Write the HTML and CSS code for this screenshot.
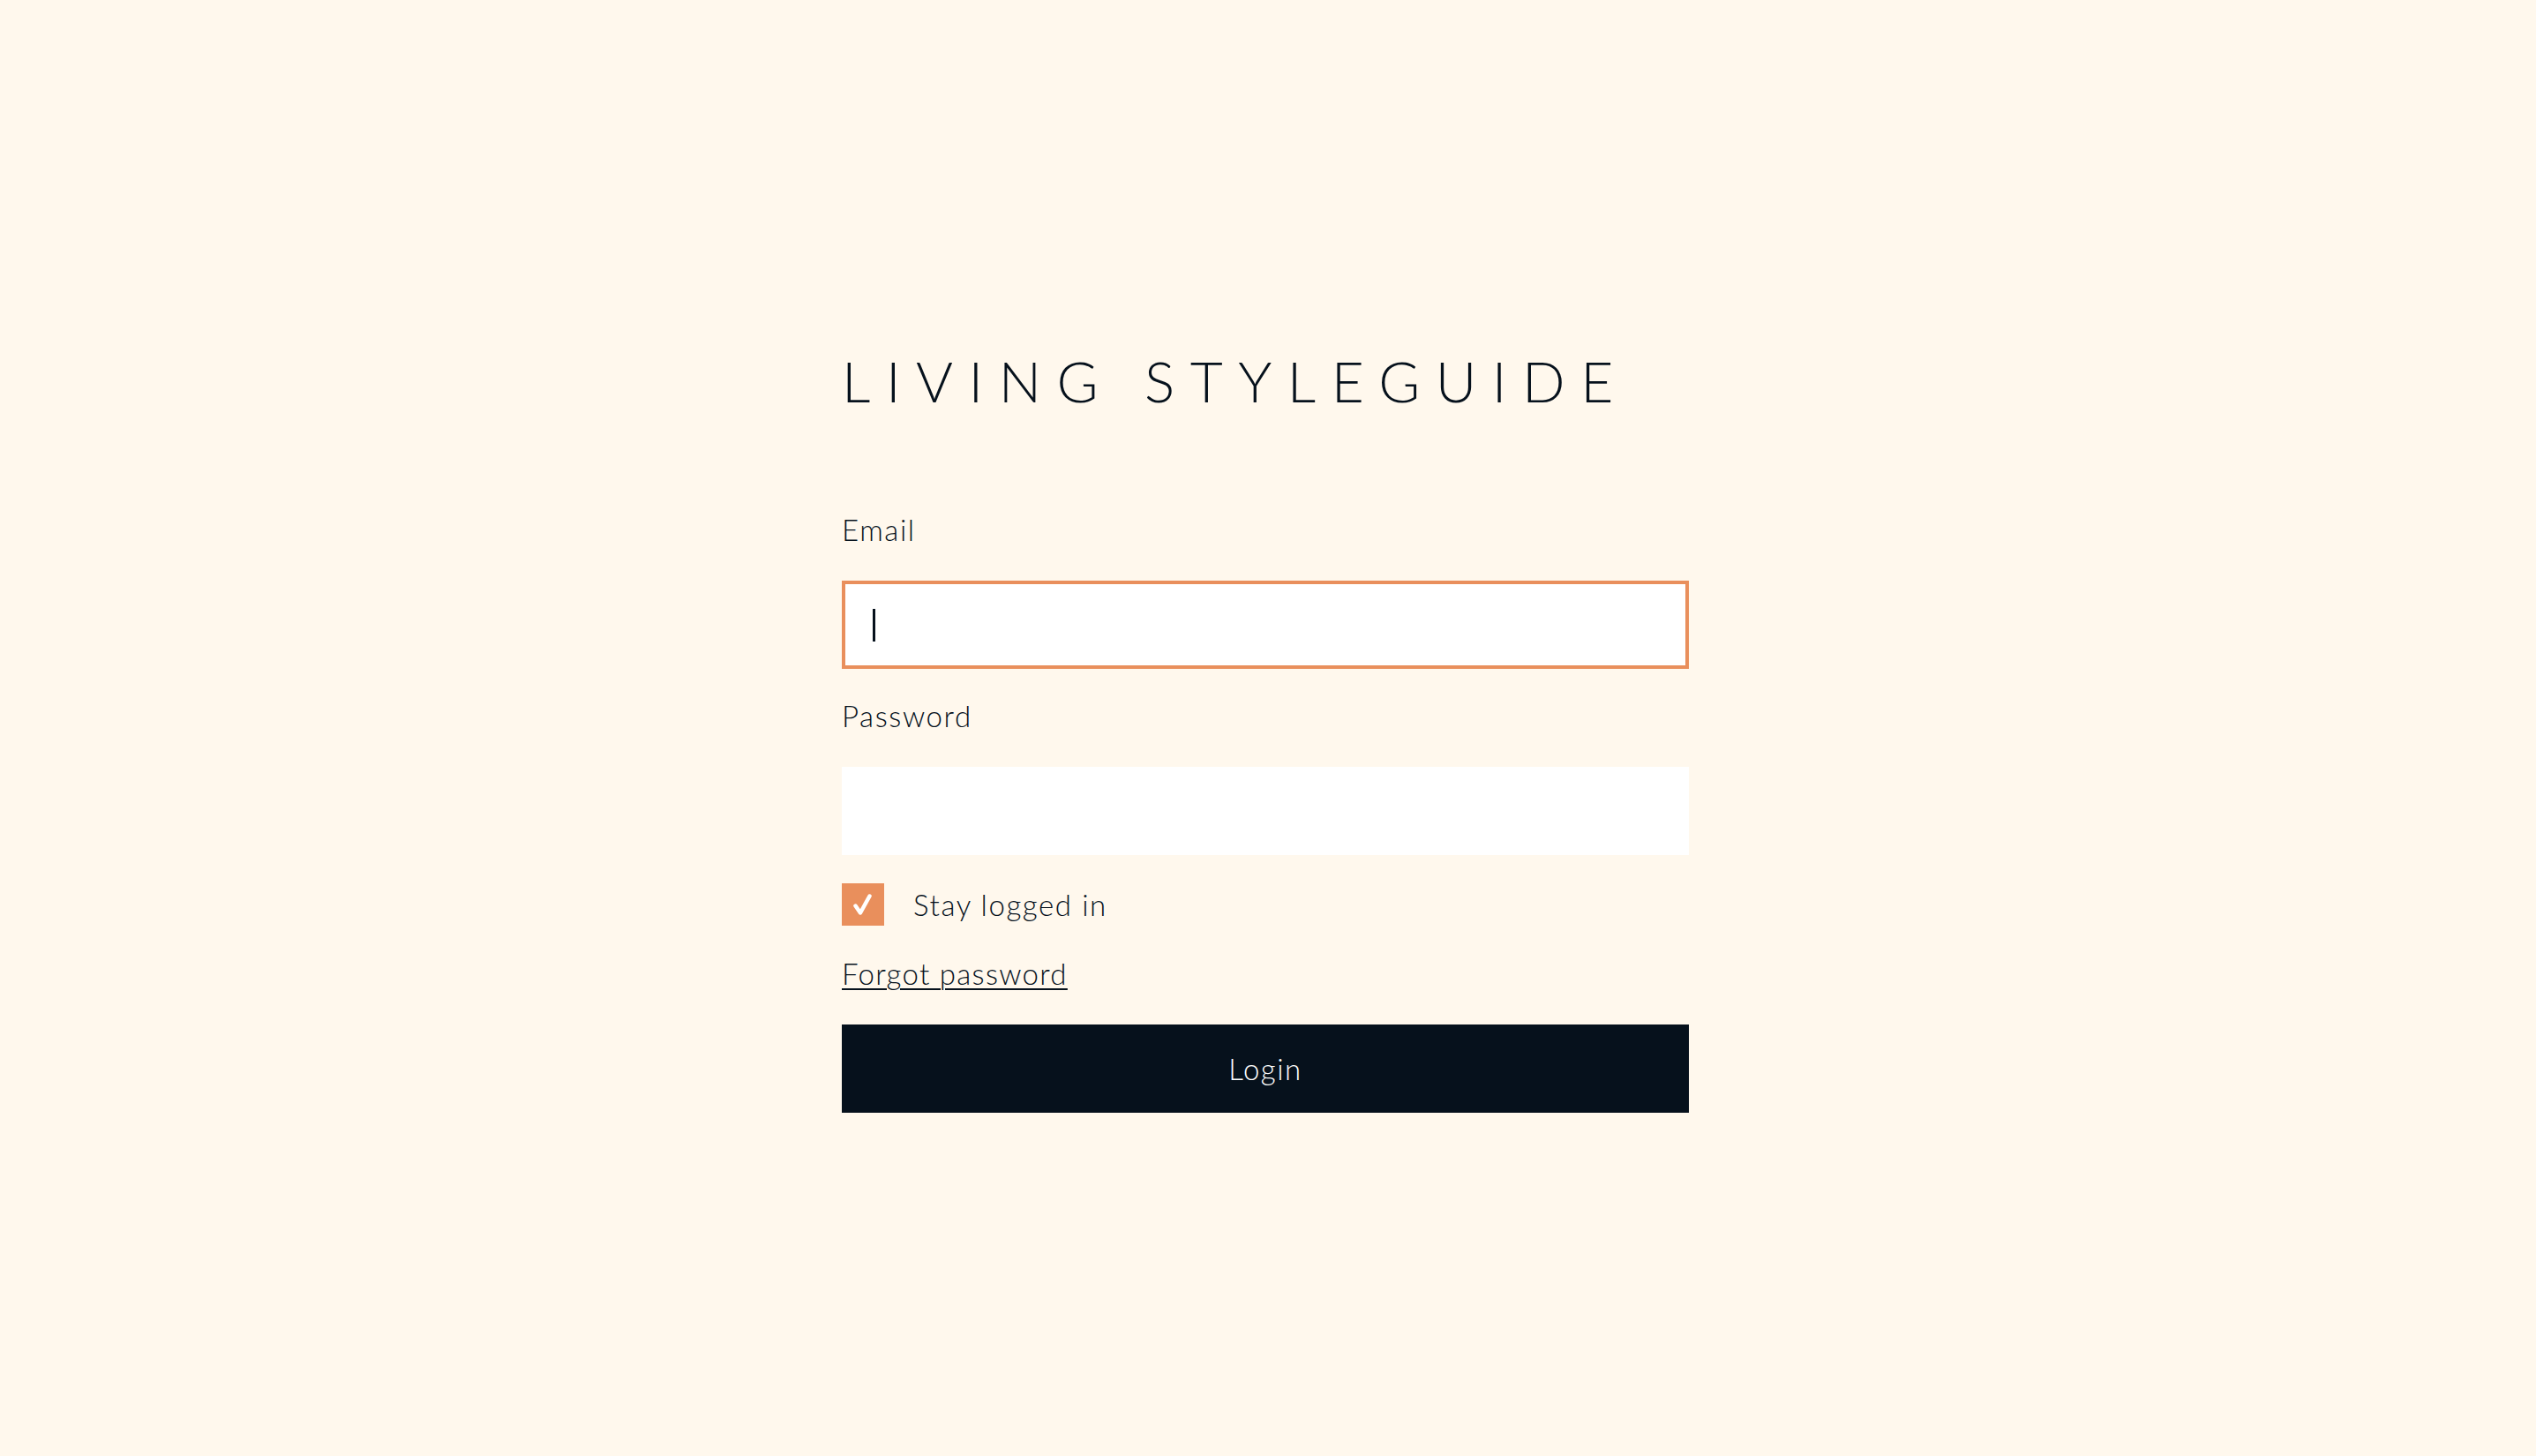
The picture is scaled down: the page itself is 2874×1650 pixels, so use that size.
FILE: index.html
```html
<!DOCTYPE html>
<html lang="en">
<head>
<meta charset="utf-8">
<title>Living Styleguide – Login</title>
<link rel="stylesheet" href="styles.css">
</head>
<body>
<main class="page">
  <form class="login">
    <h1 class="title">LIVING STYLEGUIDE</h1>
    <label class="label label-email" for="email">Email</label>
    <div class="field field-focus"><span class="caret"></span></div>
    <label class="label label-password" for="password">Password</label>
    <div class="field"></div>
    <div class="remember">
      <span class="checkbox">
        <svg viewBox="0 0 48 48" width="48" height="48" aria-hidden="true">
          <path d="M15.5 25.5 L21 33.5 L31.5 14.5" fill="none" stroke="#ffffff" stroke-width="4.5" stroke-linecap="round" stroke-linejoin="round"/>
        </svg>
      </span>
      <span class="remember-text">Stay logged in</span>
    </div>
    <a class="forgot" href="#">Forgot password</a>
    <button class="btn" type="button">Login</button>
  </form>
</main>
</body>
</html>
```

FILE: styles.css
```css
html, body {
  margin: 0;
  padding: 0;
}
body {
  background: #fff8ed;
  color: #06111c;
  font-family: "Lato", "Liberation Sans", sans-serif;
  font-weight: 300;
  width: 2874px;
  height: 1650px;
  overflow: hidden;
}
.page {
  display: flex;
  justify-content: center;
  padding-top: 400px;
  padding-right: 6px;
}
.login {
  width: 960px;
  display: flex;
  flex-direction: column;
  align-items: stretch;
}
.title {
  margin: 0;
  font-size: 64px;
  line-height: 64px;
  font-weight: 300;
  letter-spacing: 17.5px;
  color: #06111c;
  white-space: nowrap;
}
.label {
  font-size: 33px;
  line-height: 32px;
  letter-spacing: 1.6px;
}
.label-email {
  margin-top: 120px;
}
.label-password {
  margin-top: 37px;
}
.field {
  margin-top: 42px;
  height: 100px;
  box-sizing: border-box;
  background: #ffffff;
  display: flex;
  align-items: center;
  padding-left: 31px;
}
.field-focus {
  border: 4px solid #e98f5c;
  padding-left: 31px;
}
.caret {
  width: 3px;
  height: 37px;
  background: #06111c;
}
.remember {
  margin-top: 32px;
  display: flex;
  align-items: center;
  gap: 33px;
  height: 48px;
}
.checkbox {
  width: 48px;
  height: 48px;
  background: #e98f5c;
  display: flex;
}
.remember-text {
  font-size: 33px;
  line-height: 32px;
  letter-spacing: 1.6px;
}
.forgot {
  margin-top: 38px;
  align-self: flex-start;
  font-size: 33px;
  line-height: 32px;
  color: #06111c;
  text-decoration: underline;
  text-underline-offset: 4px;
  text-decoration-thickness: 2px;
  letter-spacing: 1.3px;
}
.btn {
  margin-top: 42px;
  height: 100px;
  border: 0;
  background: #06111c;
  color: #ffffff;
  font-family: "Lato", "Liberation Sans", sans-serif;
  font-weight: 300;
  font-size: 33px;
  letter-spacing: 1.5px;
  cursor: pointer;
}
```
